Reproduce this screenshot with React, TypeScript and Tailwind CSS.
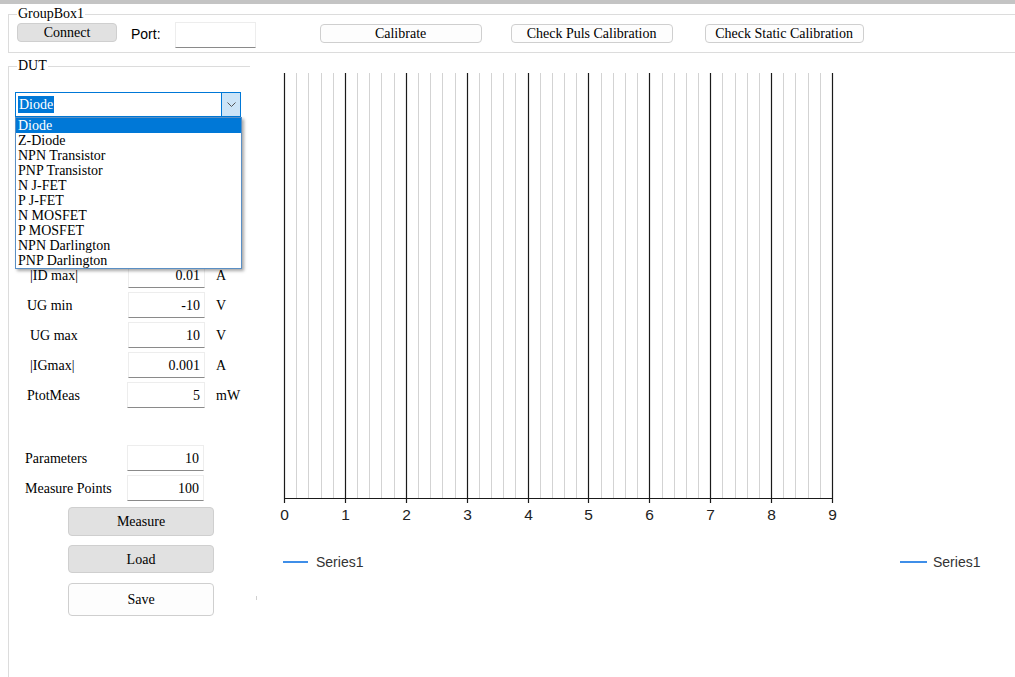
import React from "react";

const devices = [
  "Diode",
  "Z-Diode",
  "NPN Transistor",
  "PNP Transistor",
  "N J-FET",
  "P J-FET",
  "N MOSFET",
  "P MOSFET",
  "NPN Darlington",
  "PNP Darlington",
];

const params = [
  { label: "|ID max|", value: "0.01", unit: "A", pl: "pl-[21px]", tw: "w-[77px]" },
  { label: "UG min", value: "-10", unit: "V", pl: "pl-[18px]", tw: "w-[77px]" },
  { label: "UG max", value: "10", unit: "V", pl: "pl-[21px]", tw: "w-[77px]" },
  { label: "|IGmax|", value: "0.001", unit: "A", pl: "pl-[21px]", tw: "w-[77px]" },
  { label: "PtotMeas", value: "5", unit: "mW", pl: "pl-[18px]", tw: "w-[78px]" },
];

function Btn({ children, gray, className }: { children: React.ReactNode; gray?: boolean; className: string }) {
  return (
    <button
      className={`flex items-center justify-center rounded-[4px] border border-[#cfcfcf] pt-[1px] leading-none ${
        gray ? "bg-[#e1e1e1]" : "bg-[#fdfdfd]"
      } ${className}`}
    >
      {children}
    </button>
  );
}

function TextBox({ value, className }: { value: string; className: string }) {
  return (
    <div
      className={`flex h-[26px] items-center justify-end border border-[#ededed] border-b-[#8a8a8a] bg-white pr-[4px] ${className}`}
    >
      {value}
    </div>
  );
}

function Chart() {
  // svg origin sits at page (250, 53)
  const major = Array.from({ length: 10 }, (_, i) => 34 + i * 60.89);
  const minor: number[] = [];
  for (let i = 0; i < 9; i++) {
    for (let j = 1; j < 5; j++) minor.push(34 + i * 60.89 + j * 12.18);
  }
  return (
    <svg width="765" height="624" className="block">
      {minor.map((x, i) => (
        <line key={"m" + i} x1={Math.round(x) + 0.5} x2={Math.round(x) + 0.5} y1={20} y2={445} stroke="#d3d3d3" strokeWidth="1" />
      ))}
      {major.map((x, i) => (
        <g key={"M" + i}>
          <line x1={Math.round(x) + 0.5} x2={Math.round(x) + 0.5} y1={20} y2={450} stroke="#1a1a1a" strokeWidth="1.2" />
          <text
            x={Math.round(x) + 0.5}
            y={467}
            textAnchor="middle"
            fontSize="15.5"
            fill="#222"
            fontFamily="'Liberation Sans', Arial, sans-serif"
          >
            {i}
          </text>
        </g>
      ))}
      <line x1={34} x2={583} y1={445.5} y2={445.5} stroke="#1a1a1a" strokeWidth="1.2" />
      <rect x={6} y={543} width={1} height={4} fill="#d0d0d0" />
      <line x1={33} x2={58} y1={509} y2={509} stroke="#3f8ee8" strokeWidth="2" />
      <text x={66} y={514} fontSize="14" fill="#333" fontFamily="'Liberation Sans', Arial, sans-serif">
        Series1
      </text>
      <line x1={650} x2={677} y1={509} y2={509} stroke="#3f8ee8" strokeWidth="2" />
      <text x={683} y={514} fontSize="14" fill="#333" fontFamily="'Liberation Sans', Arial, sans-serif">
        Series1
      </text>
    </svg>
  );
}

export default function App() {
  return (
    <div className="relative h-[677px] w-[1015px] overflow-hidden bg-white font-['Liberation_Serif',serif] text-[14px] text-black">
      <div className="h-[4px] bg-[#c4c4c4]" />

      {/* GroupBox1 */}
      <div className="relative ml-[8px] mt-[10px] h-[39px] border-y border-l border-[#dcdcdc]">
        <span className="absolute left-[8px] top-[-10px] bg-white px-[1px] leading-[17px]">GroupBox1</span>
        <div className="flex items-start">
          <Btn gray className="ml-[8px] mt-[8px] h-[19px] w-[100px]">Connect</Btn>
          <span className="ml-[14px] mt-[11px] font-['Liberation_Sans',Arial,sans-serif] leading-[17px]">Port:</span>
          <div className="ml-[14px] mt-[7px] h-[26px] w-[81px] border border-[#ededed] border-b-[#8a8a8a] bg-white" />
          <Btn className="ml-[64px] mt-[9px] h-[19px] w-[162px]">Calibrate</Btn>
          <Btn className="ml-[29px] mt-[9px] h-[19px] w-[162px]">Check Puls Calibration</Btn>
          <Btn className="ml-[32px] mt-[9px] h-[19px] w-[159px]">Check Static Calibration</Btn>
        </div>
      </div>

      <div className="flex">
        {/* DUT */}
        <div className="w-[250px] shrink-0 pl-[8px] pt-[13px]">
          <div className="relative h-[620px] border-l border-t border-[#dcdcdc]">
            <span className="absolute left-[8px] top-[-10px] bg-white px-[1px] leading-[17px]">DUT</span>

            <div className="relative ml-[6px] mt-[25px] w-[226px]">
              <div className="flex h-[25px] items-stretch border border-[#0078d7] bg-white">
                <div className="flex flex-1 items-center pl-[2px]">
                  <span className="bg-[#0078d7] px-[1px] leading-[17px] text-white">Diode</span>
                </div>
                <div className="flex w-[19px] items-center justify-center border-l border-[#0078d7] bg-[#cce4f7]">
                  <svg width="9" height="5" viewBox="0 0 9 5">
                    <path d="M0.5 0.5 L4.5 4.5 L8.5 0.5" fill="none" stroke="#555" strokeWidth="1" />
                  </svg>
                </div>
              </div>
              <div className="absolute left-0 top-full z-10 w-[227px] border border-[#5a8fc4] bg-white shadow-[2px_2px_3px_rgba(0,0,0,0.35)]">
                {devices.map((d, i) => (
                  <div
                    key={d}
                    className={`h-[15px] pl-[2px] leading-[15px] ${i === 0 ? "bg-[#0078d7] text-white" : ""}`}
                  >
                    {d}
                  </div>
                ))}
              </div>
            </div>

            <div className="mt-[145px] flex flex-col gap-[4px]">
              {params.map((p) => (
                <div key={p.label} className="flex h-[26px] items-center">
                  <span className={`shrink-0 ${p.pl} ${p.label === "PtotMeas" ? "w-[118px]" : "w-[119px]"}`}>{p.label}</span>
                  <TextBox value={p.value} className={p.tw} />
                  <span className="ml-[11px]">{p.unit}</span>
                </div>
              ))}
            </div>

            <div className="mt-[37px] flex flex-col gap-[4px]">
              <div className="flex h-[26px] items-center">
                <span className="w-[118px] shrink-0 pl-[16px]">Parameters</span>
                <TextBox value="10" className="w-[77px]" />
              </div>
              <div className="flex h-[26px] items-center">
                <span className="w-[118px] shrink-0 pl-[16px]">Measure Points</span>
                <TextBox value="100" className="w-[77px]" />
              </div>
            </div>

            <div className="ml-[59px] flex flex-col">
              <Btn gray className="mt-[6px] h-[29px] w-[146px]">Measure</Btn>
              <Btn gray className="mt-[9px] h-[28px] w-[146px]">Load</Btn>
              <Btn className="mt-[10px] h-[33px] w-[146px]">Save</Btn>
            </div>
          </div>
        </div>

        <Chart />
      </div>
    </div>
  );
}
